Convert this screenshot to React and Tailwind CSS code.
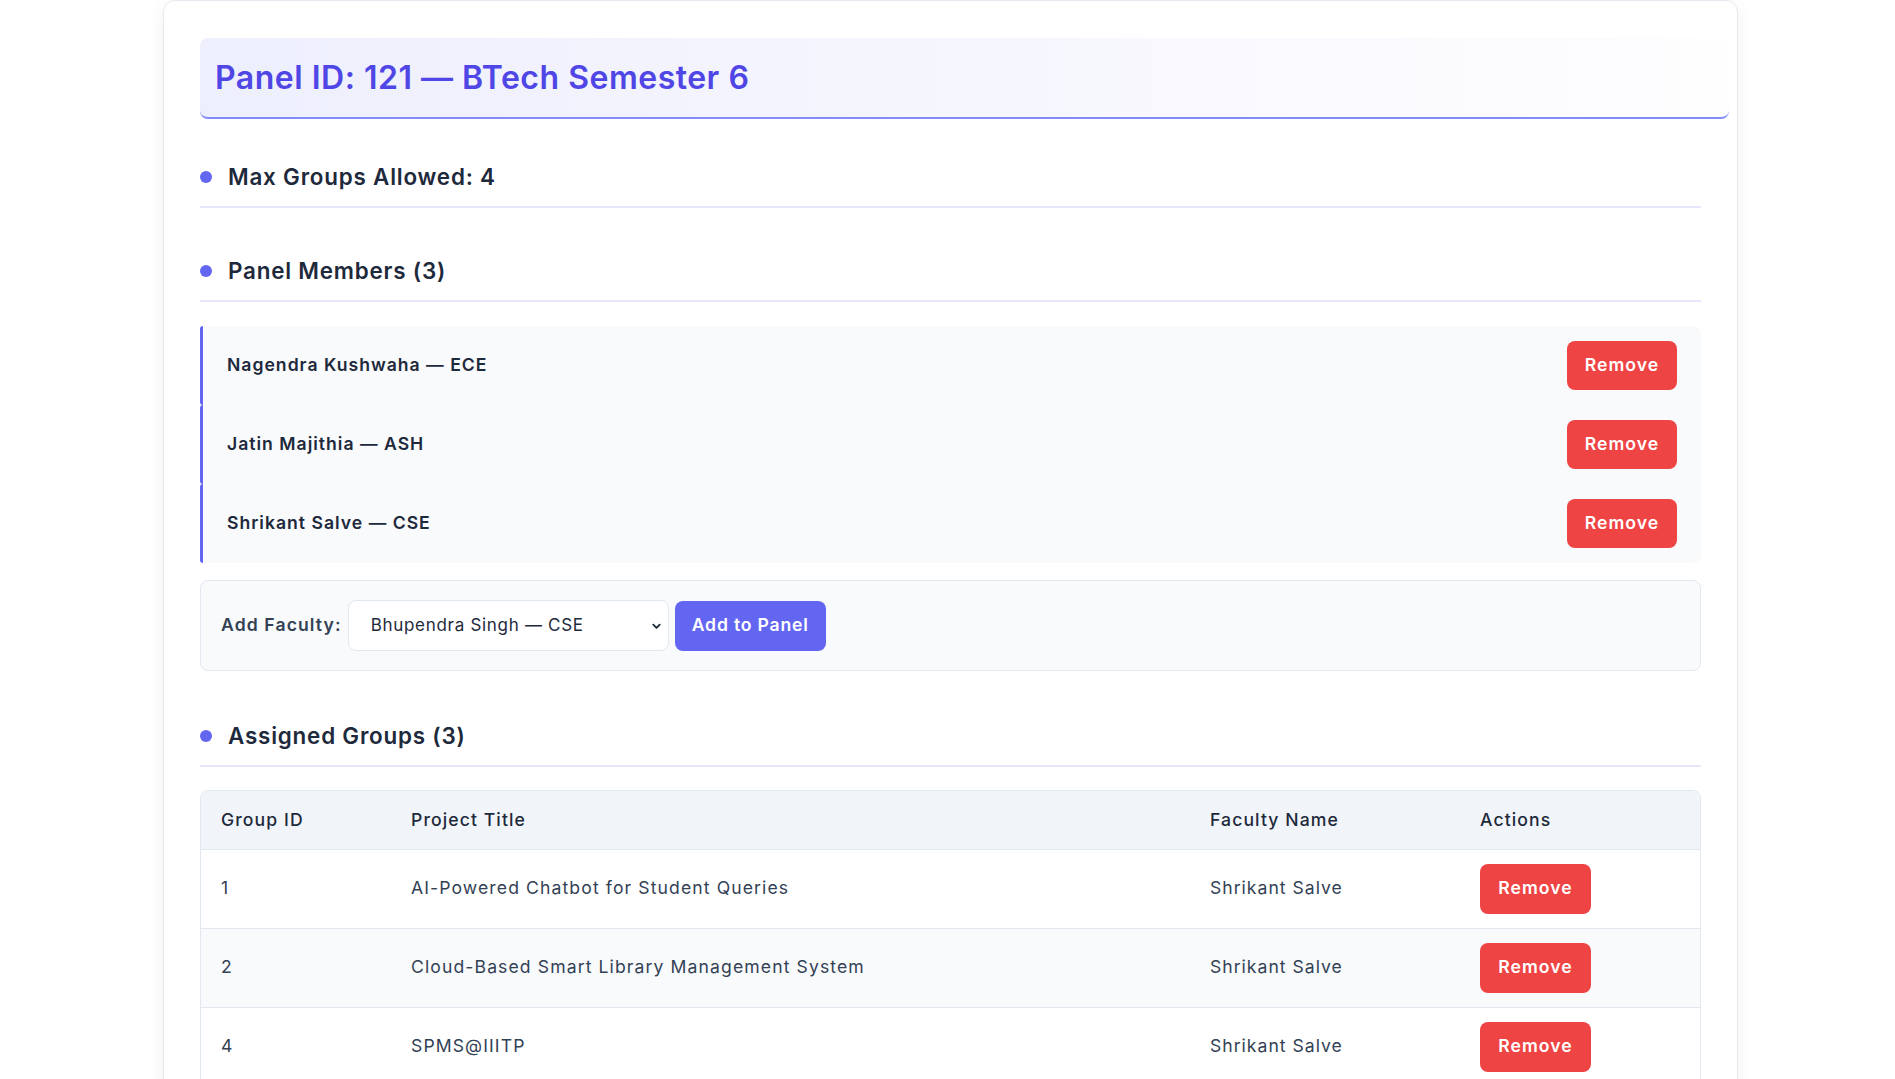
import React from 'react'

const members = [
  { name: 'Nagendra Kushwaha', dept: 'ECE' },
  { name: 'Jatin Majithia', dept: 'ASH' },
  { name: 'Shrikant Salve', dept: 'CSE' },
]

const groups = [
  { id: 1, title: 'AI-Powered Chatbot for Student Queries', faculty: 'Shrikant Salve' },
  { id: 2, title: 'Cloud-Based Smart Library Management System', faculty: 'Shrikant Salve' },
  { id: 4, title: 'SPMS@IIITP', faculty: 'Shrikant Salve' },
]

function SectionTitle({ children, className = '' }) {
  return (
    <div className={`flex items-center gap-4 pb-[12px] border-b-2 border-[#e6e6fa] ${className}`}>
      <span className="w-3 h-3 rounded-full bg-[#6366f1] flex-shrink-0" />
      <h3 className="text-[22.4px] leading-[34px] font-semibold text-[#1e293b] tracking-[0.8px]">{children}</h3>
    </div>
  )
}

function RemoveButton({ className = '' }) {
  return (
    <button className={`h-[49px] w-[110px] rounded-lg bg-[#ef4444] text-white text-[17.6px] font-semibold tracking-[1px] ${className}`}>
      Remove
    </button>
  )
}

export default function App() {
  return (
    <div className="min-h-screen bg-white font-['Inter',sans-serif]">
      <div className="ml-[163px] w-[1575px] bg-white border border-[#e5e9f0] rounded-xl shadow-[0_4px_18px_rgba(15,23,42,0.06)] px-9 pt-[37px] pb-10">
        <div className="h-[81px] w-[calc(100%+28px)] flex items-center px-[15px] rounded-lg border-b-2 border-[#818cf8] bg-linear-to-r from-[#eeeffd] via-[#f6f6fe] to-[#fefeff]">
          <h2 className="text-[32px] font-semibold text-[#4f46e5] tracking-[0.5px]">Panel ID: 121 — BTech Semester 6</h2>
        </div>

        <SectionTitle className="mt-[41px]">Max Groups Allowed: 4</SectionTitle>

        <SectionTitle className="mt-[46px]">Panel Members (3)</SectionTitle>

        <div className="mt-[24px] bg-[#f8fafc] rounded-lg">
          {members.map(m => (
            <div key={m.name} className="h-[79px] flex items-center justify-between pl-6 pr-6 border-l-[3px] border-[#6366f1] rounded-l-[3px]">
              <span className="text-[17.6px] font-semibold text-[#1e293b] tracking-[1px]">{m.name} — {m.dept}</span>
              <RemoveButton />
            </div>
          ))}
        </div>

        <div className="mt-[17px] flex items-center gap-[6px] px-5 h-[91px] bg-[#f8fafc] border border-[#e2e8f0] rounded-lg">
          <label className="text-[17.6px] font-semibold text-[#334155] tracking-[1.1px]">Add Faculty:</label>
          <div className="relative w-[321px] h-[51px] bg-white border border-[#e2e8f0] rounded-lg flex items-center pl-[22px]">
            <span className="text-[17px] text-[#1e293b] tracking-[0.7px]">Bhupendra Singh — CSE</span>
            <svg className="absolute right-[6px] top-1/2 -translate-y-1/2 w-[11px] h-[11px]" viewBox="0 0 12 12" fill="none">
              <path d="M2.5 4.5l3.5 3.5 3.5-3.5" stroke="#1e293b" strokeWidth="2" strokeLinecap="round" strokeLinejoin="round" />
            </svg>
          </div>
          <button className="h-[50px] w-[151px] rounded-lg bg-[#6366f1] text-white text-[17.6px] font-semibold tracking-[0.8px]">Add to Panel</button>
        </div>

        <SectionTitle className="mt-[48px]">Assigned Groups (3)</SectionTitle>

        <div className="mt-[23px] border border-[#e2e8f0] rounded-lg overflow-hidden">
          <table className="w-full border-collapse table-fixed text-left">
            <colgroup>
              <col className="w-[190px]" />
              <col className="w-[799px]" />
              <col className="w-[270px]" />
              <col />
            </colgroup>
            <thead>
              <tr className="bg-[#f1f5f9] border-b border-[#e2e8f0]">
                <th className="h-[58px] px-5 text-[17.6px] font-medium text-[#1e293b] tracking-[1.1px]">Group ID</th>
                <th className="h-[58px] px-5 text-[17.6px] font-medium text-[#1e293b] tracking-[1.1px]">Project Title</th>
                <th className="h-[58px] px-5 text-[17.6px] font-medium text-[#1e293b] tracking-[1.1px]">Faculty Name</th>
                <th className="h-[58px] px-5 text-[17.6px] font-medium text-[#1e293b] tracking-[1.1px]">Actions</th>
              </tr>
            </thead>
            <tbody>
              {groups.map((g, i) => (
                <tr key={g.id} className={`border-b border-[#e2e8f0] ${i % 2 === 1 ? 'bg-[#f8fafc]' : 'bg-white'}`}>
                  <td className="px-5 py-[14px] text-[17.6px] text-[#334155] tracking-[1.1px]">{g.id}</td>
                  <td className="px-5 py-[14px] text-[17.6px] text-[#334155] tracking-[1.1px]">{g.title}</td>
                  <td className="px-5 py-[14px] text-[17.6px] text-[#334155] tracking-[1px]">{g.faculty}</td>
                  <td className="px-5 py-[14px]">
                    <RemoveButton className="h-[50px] w-[111px]" />
                  </td>
                </tr>
              ))}
            </tbody>
          </table>
        </div>
      </div>
    </div>
  )
}
